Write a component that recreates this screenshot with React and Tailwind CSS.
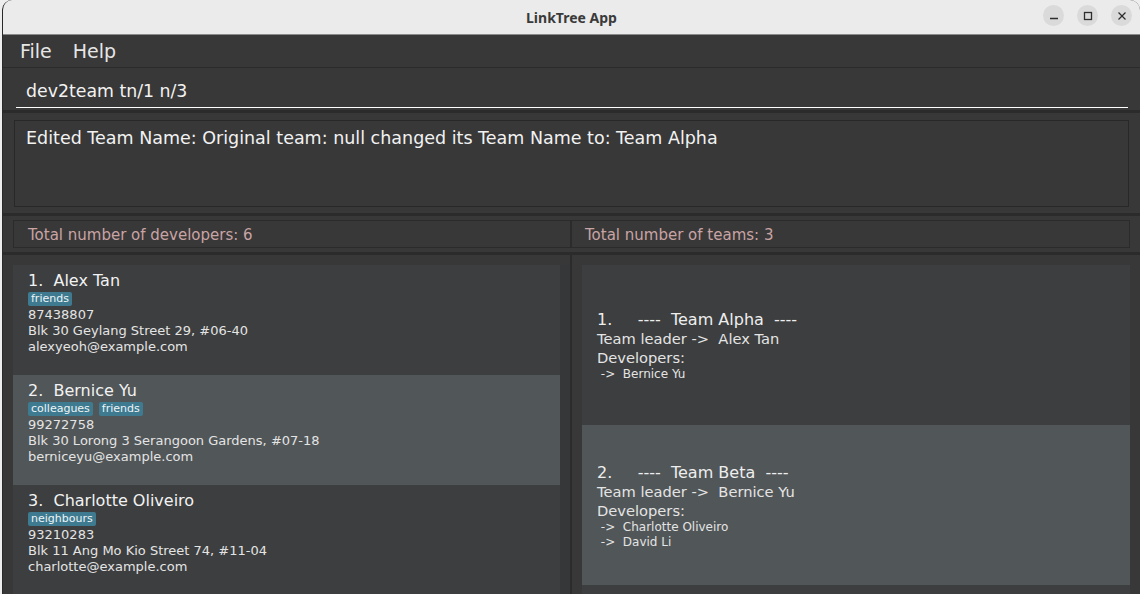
import React from "react";

const developers = [
  {
    name: "Alex Tan",
    tags: ["friends"],
    phone: "87438807",
    address: "Blk 30 Geylang Street 29, #06-40",
    email: "alexyeoh@example.com",
  },
  {
    name: "Bernice Yu",
    tags: ["colleagues", "friends"],
    phone: "99272758",
    address: "Blk 30 Lorong 3 Serangoon Gardens, #07-18",
    email: "berniceyu@example.com",
  },
  {
    name: "Charlotte Oliveiro",
    tags: ["neighbours"],
    phone: "93210283",
    address: "Blk 11 Ang Mo Kio Street 74, #11-04",
    email: "charlotte@example.com",
  },
];

const teams = [
  { name: "Team Alpha", leader: "Alex Tan", devs: ["Bernice Yu"] },
  { name: "Team Beta", leader: "Bernice Yu", devs: ["Charlotte Oliveiro", "David Li"] },
];

const font = { fontFamily: '"DejaVu Sans", "Noto Sans", sans-serif' };

const WindowButton = ({ children }) => (
  <div className="w-[21px] h-[21px] rounded-full bg-[#dadada] flex items-center justify-center">
    <svg width="10" height="10" viewBox="0 0 10 10" fill="none" stroke="#2e2e2e" strokeWidth="1.3">
      {children}
    </svg>
  </div>
);

const DeveloperCard = ({ dev, index }) => (
  <div
    className={`h-[110px] shrink-0 pl-[15px] pt-[6px] flex flex-col ${
      index % 2 === 1 ? "bg-[#515658]" : "bg-[#3c3e3f]"
    }`}
  >
    <div className="text-[16px] leading-[20px] text-[#f2f2f2] whitespace-pre">
      {index + 1}.  {dev.name}
    </div>
    <div className="flex gap-[6px] mt-[1px]">
      {dev.tags.map((tag) => (
        <span
          key={tag}
          className="bg-[#3e7b91] text-[#eef4f6] text-[11px] leading-[12px] py-[1px] px-[3px] rounded-[2px]"
        >
          {tag}
        </span>
      ))}
    </div>
    <div className="text-[13px] leading-[16px] text-[#e4e4e4] mt-[1px]">{dev.phone}</div>
    <div className="text-[13px] leading-[16px] text-[#e4e4e4]">{dev.address}</div>
    <div className="text-[13px] leading-[16px] text-[#e4e4e4]">{dev.email}</div>
  </div>
);

const TeamCard = ({ team, index }) => (
  <div
    className={`h-[160px] shrink-0 pl-[15px] pt-[3px] flex flex-col justify-center ${
      index % 2 === 1 ? "bg-[#515658]" : "bg-[#3c3e3f]"
    }`}
  >
    <div className="text-[16px] leading-[18px] text-[#eeeeee] whitespace-pre">
      {index + 1}.     ----  {team.name}  ----
    </div>
    <div className="text-[14.67px] leading-[19px] text-[#e4e4e4] whitespace-pre">
      Team leader -&gt;  {team.leader}
    </div>
    <div className="text-[14.67px] leading-[19px] text-[#e4e4e4]">Developers:</div>
    {team.devs.map((d) => (
      <div key={d} className="text-[12px] leading-[15px] text-[#e4e4e4] whitespace-pre">
        {" ->  "}
        {d}
      </div>
    ))}
  </div>
);

export default function App() {
  return (
    <div className="w-[1140px] h-[594px] bg-[#eeeeee] flex overflow-hidden">
      <div className="ml-[2px] flex-1 flex flex-col rounded-t-[10px] overflow-hidden border-l border-[#2a2a2a] bg-[#383838]">
        {/* title bar */}
        <div className="h-[35px] shrink-0 bg-[#ebebeb] border-b border-[#8a8a8a] relative flex items-center justify-center">
          <span
            className="text-[14px] font-bold text-[#3a3a3a]"
            style={{ fontFamily: '"Noto Sans", "DejaVu Sans", sans-serif' }}
          >
            LinkTree App
          </span>
          <div className="absolute right-[8px] top-[5px] flex gap-[13px]">
            <WindowButton>
              <line x1="1" y1="7.5" x2="9" y2="7.5" />
            </WindowButton>
            <WindowButton>
              <rect x="1.5" y="1.5" width="7" height="7" />
            </WindowButton>
            <WindowButton>
              <line x1="1.5" y1="1.5" x2="8.5" y2="8.5" />
              <line x1="8.5" y1="1.5" x2="1.5" y2="8.5" />
            </WindowButton>
          </div>
        </div>

        <div className="flex-1 flex flex-col min-h-0" style={font}>
          {/* menu bar */}
          <div className="h-[33px] shrink-0 flex items-center gap-[21px] pl-[17px] border-b border-[#2b2b2b] text-[19px] text-[#e6e6e6]">
            <span>File</span>
            <span>Help</span>
          </div>

          {/* command box */}
          <div className="h-[42px] shrink-0 px-[12px] flex flex-col">
            <div className="h-[40px] flex items-center pl-[10px] pt-[8px] border-b border-white text-[17.33px] text-[#f2f2f2] ml-[1px]">
              dev2team tn/1 n/3
            </div>
          </div>
          <div className="h-[3px] shrink-0 bg-[#2b2b2b]" />

          {/* result display */}
          <div className="h-[100px] shrink-0 px-[11px] pt-[7px] pb-[6px]">
            <div className="h-full border border-[#282828] pl-[11px] pt-[4px] text-[17.5px] text-[#f2f2f2]">
              Edited Team Name: Original team: null changed its Team Name to: Team Alpha
            </div>
          </div>
          <div className="h-[3px] shrink-0 bg-[#2b2b2b]" />

          {/* status bars */}
          <div className="h-[36px] shrink-0 pl-[10px] pr-[10px] pt-[4px] pb-[4px] flex">
            <div className="w-[558px] border border-[#2b2b2b] flex items-center pl-[14px] pt-[3px] text-[15px] text-[#c9a4a4]">
              Total number of developers: 6
            </div>
            <div className="flex-1 border border-[#2b2b2b] flex items-center pl-[13px] pt-[3px] text-[15px] text-[#c9a4a4]">
              Total number of teams: 3
            </div>
          </div>
          <div className="h-[3px] shrink-0 bg-[#2b2b2b]" />

          {/* lists */}
          <div className="flex-1 flex min-h-0">
            <div className="w-[567px] shrink-0 pl-[10px] pt-[10px] overflow-hidden">
              <div className="h-full bg-[#363738] pr-[10px] flex flex-col">
                {developers.map((dev, i) => (
                  <DeveloperCard key={dev.email} dev={dev} index={i} />
                ))}
              </div>
            </div>
            <div className="w-[2px] shrink-0 bg-[#2b2b2b]" />
            <div className="flex-1 pl-[10px] pr-[10px] pt-[10px] overflow-hidden flex flex-col">
              {teams.map((team, i) => (
                <TeamCard key={team.name} team={team} index={i} />
              ))}
              <div className="h-[160px] shrink-0 bg-[#3c3e3f]" />
            </div>
          </div>
        </div>
      </div>
    </div>
  );
}
